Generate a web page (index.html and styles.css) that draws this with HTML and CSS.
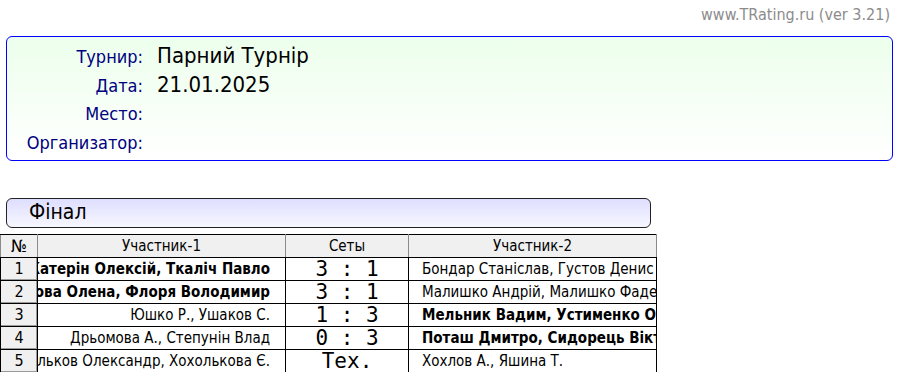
FILE: index.html
```html
<!DOCTYPE html>
<html lang="uk">
<head>
<meta charset="utf-8">
<title>Парний Турнір</title>
<link rel="stylesheet" href="styles.css">
</head>
<body>
<div class="site">www.TRating.ru (ver 3.21)</div>

<div class="info">
  <div class="info-row"><span class="label">Турнир:</span><span class="value">Парний Турнір</span></div>
  <div class="info-row"><span class="label">Дата:</span><span class="value">21.01.2025</span></div>
  <div class="info-row"><span class="label">Место:</span><span class="value"></span></div>
  <div class="info-row"><span class="label">Организатор:</span><span class="value"></span></div>
</div>

<div class="stage">Фінал</div>

<table class="games">
  <colgroup>
    <col class="c-num"><col class="c-p1"><col class="c-score"><col class="c-p2">
  </colgroup>
  <thead>
    <tr><th class="num">№</th><th>Участник-1</th><th>Сеты</th><th>Участник-2</th></tr>
  </thead>
  <tbody>
    <tr>
      <td class="num">1</td>
      <td class="p1"><div class="clip-r win">Катерін Олексій, Ткаліч Павло</div></td>
      <td class="score">3 : 1</td>
      <td class="p2"><div class="clip-l">Бондар Станіслав, Густов Денис</div></td>
    </tr>
    <tr>
      <td class="num">2</td>
      <td class="p1"><div class="clip-r win">Іванова Олена, Флоря Володимир</div></td>
      <td class="score">3 : 1</td>
      <td class="p2"><div class="clip-l">Малишко Андрій, Малишко Фадей</div></td>
    </tr>
    <tr>
      <td class="num">3</td>
      <td class="p1"><div class="clip-r">Юшко Р., Ушаков С.</div></td>
      <td class="score">1 : 3</td>
      <td class="p2"><div class="clip-l win">Мельник Вадим, Устименко Олег</div></td>
    </tr>
    <tr>
      <td class="num">4</td>
      <td class="p1"><div class="clip-r">Дрьомова А., Степунін Влад</div></td>
      <td class="score">0 : 3</td>
      <td class="p2"><div class="clip-l win">Поташ Дмитро, Сидорець Віктор</div></td>
    </tr>
    <tr>
      <td class="num">5</td>
      <td class="p1"><div class="clip-r">Хохольков Олександр, Хохолькова Є.</div></td>
      <td class="score">Тех.</td>
      <td class="p2"><div class="clip-l">Хохлов А., Яшина Т.</div></td>
    </tr>
  </tbody>
</table>
</body>
</html>
```

FILE: styles.css
```css
html, body {
  margin: 0;
  padding: 0;
  background: #ffffff;
}

body {
  font-family: "DejaVu Sans Condensed", "DejaVu Sans", sans-serif;
  color: #000;
  overflow: hidden;
}

.site {
  height: 36px;
  box-sizing: border-box;
  padding: 5px 10px 0 0;
  text-align: right;
  font-size: 16px;
  line-height: 20px;
  color: #8c8c8c;
}

.info {
  margin: 0 7px 0 6px;
  height: 125px;
  box-sizing: border-box;
  border: 1px solid #0000ff;
  border-radius: 6px;
  padding: 4px 0 0 0;
  background: linear-gradient(to bottom, #ecffec 0%, #ffffff 100%);
}

.info-row {
  display: flex;
  align-items: baseline;
  height: 29px;
  line-height: 29px;
}

.label {
  width: 136px;
  text-align: right;
  font-size: 18px;
  color: #000080;
  flex: none;
}

.value {
  margin-left: 14px;
  font-size: 22px;
  color: #000;
}

.stage {
  margin: 37px 0 0 6px;
  width: 645px;
  height: 30px;
  box-sizing: border-box;
  border: 1px solid #222;
  border-radius: 6px;
  padding-left: 22px;
  font-size: 21px;
  line-height: 27px;
  background: linear-gradient(to bottom, #dedeff 0%, #f7f7ff 100%);
}

.games {
  margin-top: 6px;
  border-collapse: collapse;
  table-layout: fixed;
  width: 656px;
  border: 1px solid #000;
}

.c-num { width: 37px; }
.c-p1 { width: 248px; }
.c-score { width: 123px; }
.c-p2 { width: 248px; }

.games th,
.games td {
  border: 1px solid #000;
  height: 22px;
  padding: 0;
  line-height: 20px;
  overflow: hidden;
  white-space: nowrap;
}

.games th {
  background: #f0f0f0;
  font-weight: normal;
  font-size: 15px;
  text-align: center;
  border-color: #000 #8a8a8a #000 #8a8a8a;
}

.games th.num {
  font-size: 17px;
}

.games td {
  font-size: 15px;
}

.games td.num {
  background: #f0f0f0;
  text-align: center;
  font-size: 16px;
  box-shadow: inset -1px -1px 0 #9a9a9a;
}

.clip-r {
  display: flex;
  justify-content: flex-end;
  overflow: hidden;
  padding-right: 15px;
}

.clip-l {
  overflow: hidden;
  padding-left: 13px;
}

.win {
  font-weight: bold;
}

.games td.score {
  text-align: center;
  font-family: "DejaVu Sans Mono", "Liberation Mono", monospace;
  font-size: 21px;
  white-space: pre;
}
```
